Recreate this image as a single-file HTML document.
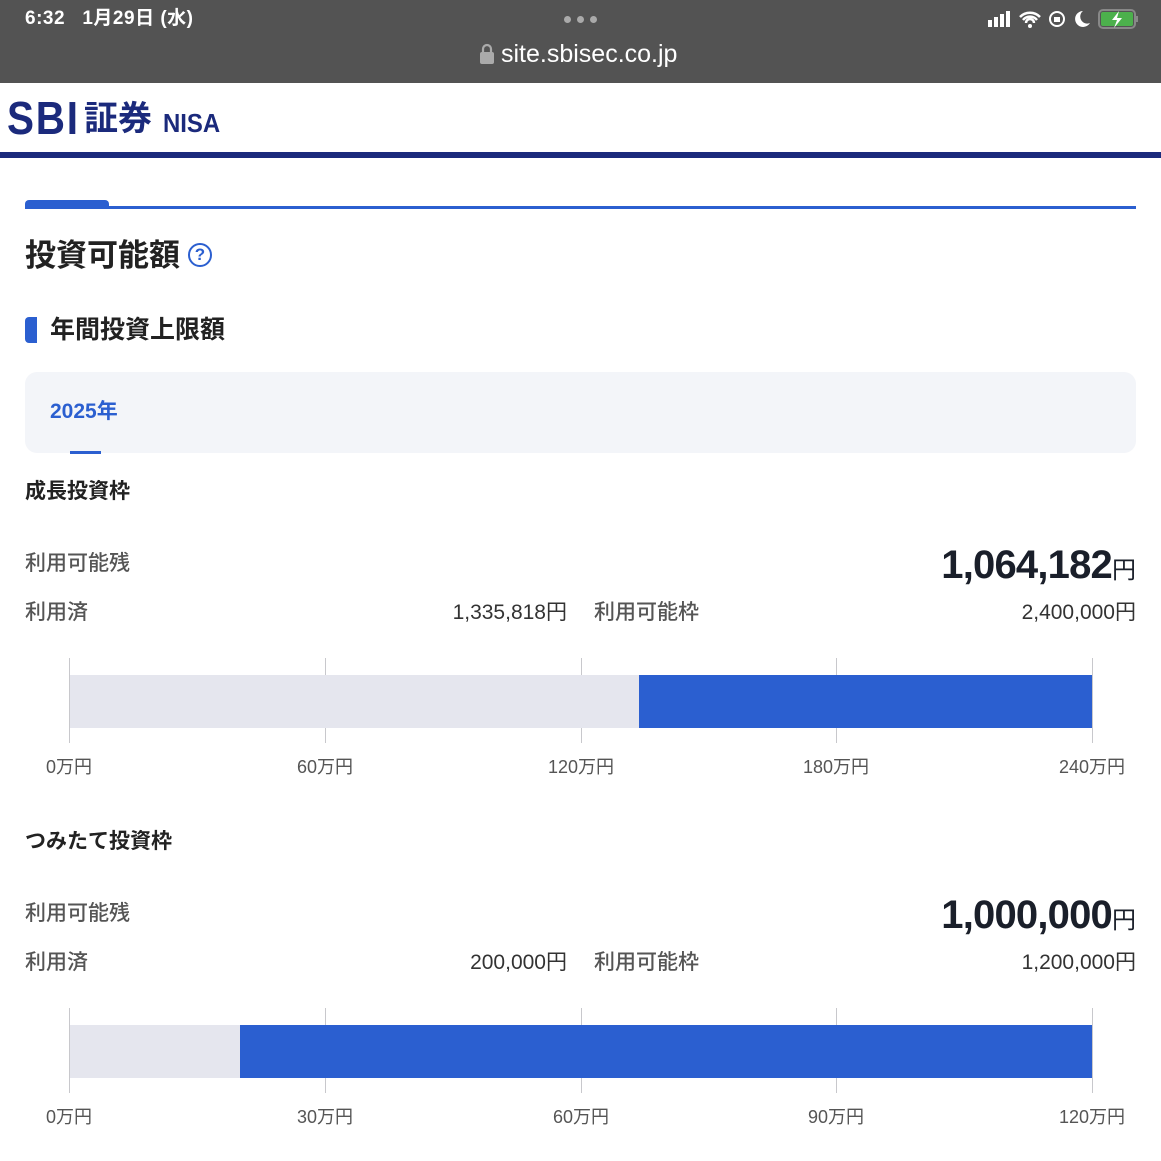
<!DOCTYPE html>
<html><head><meta charset="utf-8"><style>
*{margin:0;padding:0;box-sizing:border-box}
body{width:1161px;height:1161px;position:relative;background:#fff;font-family:"Liberation Sans","Noto Sans CJK JP",sans-serif;overflow:hidden;color:#222}
.a{position:absolute;white-space:nowrap}
.g{color:#555;font-size:21px;line-height:21px;font-weight:500}
.v{color:#333;font-size:21px;line-height:21px}
.lab{color:#555;font-size:18px;line-height:18px;transform:translateX(-50%)}
.tick{position:absolute;width:1px;background:#c8c8cc}
.big{font-size:40px;line-height:44px;font-weight:bold;color:#1a1f2a;letter-spacing:-0.8px}
</style></head><body>
<div class="a" style="left:0;top:0;width:1161px;height:83px;background:#535353"></div>
<div class="a" style="left:25px;top:8px;color:#fff;font-size:19px;line-height:22px;font-weight:bold;letter-spacing:0.5px">6:32&nbsp;&nbsp;&nbsp;1月29日 (水)</div>
<div class="a" style="left:564px;top:16px;width:7px;height:7px;border-radius:50%;background:#aaa"></div>
<div class="a" style="left:577px;top:16px;width:7px;height:7px;border-radius:50%;background:#aaa"></div>
<div class="a" style="left:590px;top:16px;width:7px;height:7px;border-radius:50%;background:#aaa"></div>
<svg class="a" style="left:479px;top:43px" width="16" height="22"><path d="M4 9V6a4 4 0 0 1 8 0v3" stroke="#aaa" stroke-width="2.2" fill="none"/><rect x="1" y="9" width="14" height="12" rx="2" fill="#aaa"/></svg>
<div class="a" style="left:501px;top:40px;color:#fff;font-size:25px;line-height:28px">site.sbisec.co.jp</div>
<svg class="a" style="left:985px;top:8px" width="155" height="24">
<rect x="3" y="12" width="4" height="7" fill="#fff"/><rect x="9" y="9" width="4" height="10" fill="#fff"/><rect x="15" y="6" width="4" height="13" fill="#fff"/><rect x="21" y="3" width="4" height="16" fill="#fff"/>
<path d="M35 9a14 14 0 0 1 20 0M38 12a9 9 0 0 1 14 0M41 15a4 4 0 0 1 8 0" stroke="#fff" stroke-width="2.5" fill="none"/><circle cx="45" cy="18" r="2" fill="#fff"/>
<circle cx="72" cy="11" r="7" stroke="#fff" stroke-width="2" fill="none"/><rect x="69" y="9" width="6" height="5" fill="#fff"/>
<path d="M98 3a8 8 0 1 0 7 12a7 7 0 0 1 -7 -12z" fill="#fff"/>
<rect x="114" y="2" width="36" height="18" rx="4" stroke="#888" stroke-width="2" fill="none"/><rect x="116" y="4" width="32" height="14" rx="2" fill="#4cb04c"/><rect x="151" y="8" width="2" height="6" fill="#888"/>
<path d="M134 3l-7 9h5l-3 8 8-10h-5z" fill="#fff"/></svg>
<div class="a" style="left:7px;top:93px;color:#1b2a7c;font-size:46px;line-height:50px;font-weight:bold;letter-spacing:2px;transform:scaleX(0.88);transform-origin:left">SBI</div>
<div class="a" style="left:84px;top:99px;color:#1b2a7c;font-size:34px;line-height:40px;font-weight:bold">証券</div>
<div class="a" style="left:163px;top:109px;color:#1b2a7c;font-size:26px;line-height:28px;font-weight:bold;transform:scaleX(0.92);transform-origin:left">NISA</div>
<div class="a" style="left:0;top:152px;width:1161px;height:6px;background:#1b2a7c"></div>
<div class="a" style="left:25px;top:206px;width:1111px;height:3px;background:#2b5fd0"></div>
<div class="a" style="left:25px;top:200px;width:84px;height:9px;border-radius:4px 4px 0 0;background:#2b5fd0"></div>
<div class="a" style="left:25px;top:238px;font-size:31px;line-height:36px;font-weight:bold;color:#222">投資可能額</div>
<div class="a" style="left:188px;top:243px;width:24px;height:24px;border:2px solid #2b5fd0;border-radius:50%;color:#2b5fd0;font-size:17px;line-height:20px;text-align:center;font-weight:bold">?</div>
<div class="a" style="left:25px;top:317px;width:12px;height:26px;background:#2b5fd0;border-radius:4px 0 0 4px"></div>
<div class="a" style="left:50px;top:316px;font-size:25px;line-height:28px;font-weight:bold">年間投資上限額</div>
<div class="a" style="left:25px;top:372px;width:1111px;height:81px;background:#f3f5f9;border-radius:12px"></div>
<div class="a" style="left:50px;top:400px;font-size:21px;line-height:24px;font-weight:bold;color:#2b5fd0">2025年</div>
<div class="a" style="left:70px;top:451px;width:31px;height:3px;background:#2b5fd0"></div>

<div class="a" style="left:25px;top:481px;font-size:21px;line-height:22px;font-weight:bold">成長投資枠</div>
<div class="a g" style="left:25px;top:553px">利用可能残</div>
<div class="a big" style="right:25px;top:543px">1,064,182<span style="font-size:24px;font-weight:normal;letter-spacing:0">円</span></div>
<div class="a g" style="left:25px;top:602px">利用済</div>
<div class="a v" style="right:594px;top:602px">1,335,818円</div>
<div class="a g" style="left:594px;top:602px">利用可能枠</div>
<div class="a v" style="right:25px;top:602px">2,400,000円</div>
<div class="a" style="left:69px;top:675px;width:570px;height:53px;background:#e5e6ee"></div>
<div class="a" style="left:639px;top:675px;width:453px;height:53px;background:#2b5fd0"></div>
<div class="tick" style="left:69px;top:658px;height:85px"></div>
<div class="tick" style="left:325px;top:658px;height:17px"></div><div class="tick" style="left:325px;top:728px;height:15px"></div>
<div class="tick" style="left:581px;top:658px;height:17px"></div><div class="tick" style="left:581px;top:728px;height:15px"></div>
<div class="tick" style="left:836px;top:658px;height:17px"></div><div class="tick" style="left:836px;top:728px;height:15px"></div>
<div class="tick" style="left:1092px;top:658px;height:85px"></div>
<div class="a lab" style="left:69px;top:758px">0万円</div>
<div class="a lab" style="left:325px;top:758px">60万円</div>
<div class="a lab" style="left:581px;top:758px">120万円</div>
<div class="a lab" style="left:836px;top:758px">180万円</div>
<div class="a lab" style="left:1092px;top:758px">240万円</div>

<div class="a" style="left:25px;top:831px;font-size:21px;line-height:22px;font-weight:bold">つみたて投資枠</div>
<div class="a g" style="left:25px;top:903px">利用可能残</div>
<div class="a big" style="right:25px;top:893px">1,000,000<span style="font-size:24px;font-weight:normal;letter-spacing:0">円</span></div>
<div class="a g" style="left:25px;top:952px">利用済</div>
<div class="a v" style="right:594px;top:952px">200,000円</div>
<div class="a g" style="left:594px;top:952px">利用可能枠</div>
<div class="a v" style="right:25px;top:952px">1,200,000円</div>
<div class="a" style="left:69px;top:1025px;width:171px;height:53px;background:#e5e6ee"></div>
<div class="a" style="left:240px;top:1025px;width:852px;height:53px;background:#2b5fd0"></div>
<div class="tick" style="left:69px;top:1008px;height:85px"></div>
<div class="tick" style="left:325px;top:1008px;height:17px"></div><div class="tick" style="left:325px;top:1078px;height:15px"></div>
<div class="tick" style="left:581px;top:1008px;height:17px"></div><div class="tick" style="left:581px;top:1078px;height:15px"></div>
<div class="tick" style="left:836px;top:1008px;height:17px"></div><div class="tick" style="left:836px;top:1078px;height:15px"></div>
<div class="tick" style="left:1092px;top:1008px;height:85px"></div>
<div class="a lab" style="left:69px;top:1108px">0万円</div>
<div class="a lab" style="left:325px;top:1108px">30万円</div>
<div class="a lab" style="left:581px;top:1108px">60万円</div>
<div class="a lab" style="left:836px;top:1108px">90万円</div>
<div class="a lab" style="left:1092px;top:1108px">120万円</div>
</body></html>
